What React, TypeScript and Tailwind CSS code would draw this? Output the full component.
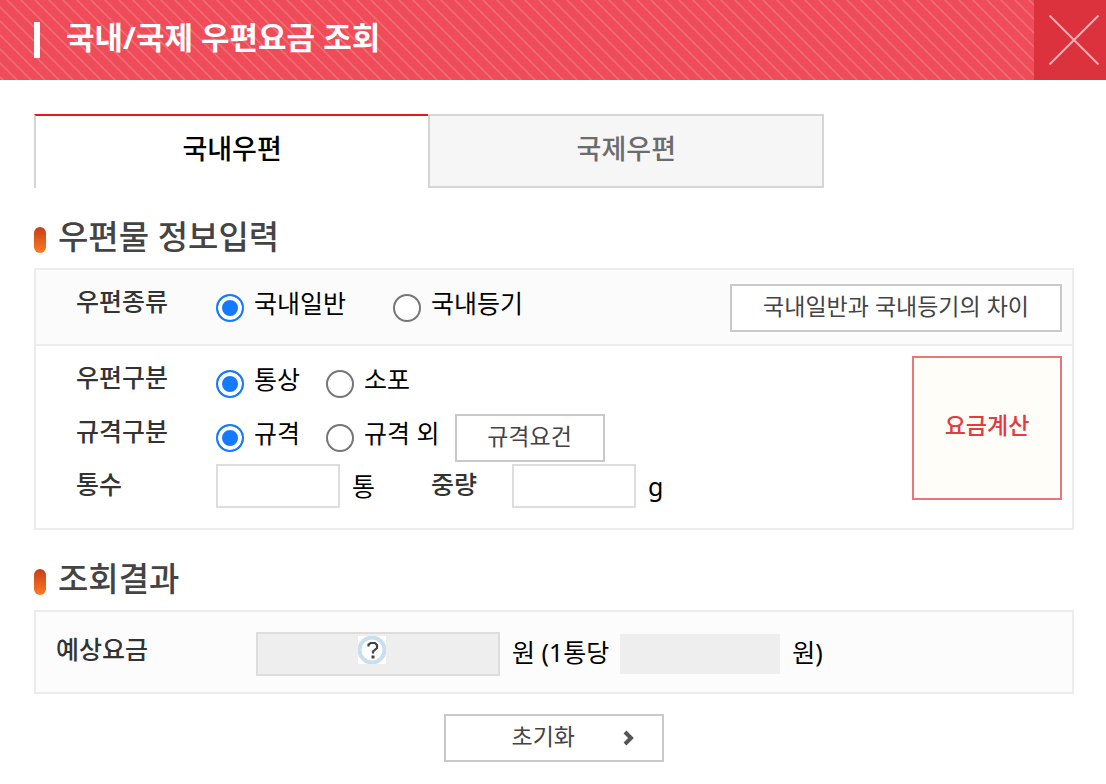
import { useState } from "react"
import type { ReactNode } from "react"

const inputClass = "h-11 w-[124px] border-2 border-[#dddddd] bg-white px-2 outline-none"
const buttonClass =
  "h-12 border-2 border-[#c9c9c9] bg-white pb-1 text-[23px] leading-8 text-[#444444] hover:border-[#999999]"

function SectionTitle({ children }: { children: ReactNode }) {
  return (
    <h2 className="flex h-10 items-center gap-3 text-[33px] leading-9 font-medium text-[#444444]">
      <span className="mt-2 h-[26px] w-3 rounded-md bg-linear-to-b from-[#c53d18] to-[#ff7a22]" />
      <span className="pt-[2px]">{children}</span>
    </h2>
  )
}

interface RadioProps {
  name: string
  label: string
  checked: boolean
  onChange: () => void
}

function Radio({ name, label, checked, onChange }: RadioProps) {
  return (
    <label className="flex items-center gap-[10px]">
      <input
        type="radio"
        name={name}
        checked={checked}
        onChange={onChange}
        className="size-7 appearance-none rounded-full border-2 border-[#767676] bg-white checked:border-[#147aff] checked:bg-[#147aff] checked:shadow-[inset_0_0_0_4px_#ffffff]"
      />
      <span className="pb-[10px]">{label}</span>
    </label>
  )
}

function Tabs({ value, onChange }: { value: string; onChange: (v: string) => void }) {
  return (
    <div role="tablist" className="flex w-[76%]">
      {["국내우편", "국제우편"].map((tab) => (
        <button
          key={tab}
          type="button"
          role="tab"
          aria-selected={value === tab}
          onClick={() => onChange(tab)}
          className={
            value === tab
              ? "h-[74px] flex-1 border-t-2 border-l-2 border-t-[#e71a1a] border-l-[#d5d5d5] bg-white pb-[6px] text-[27px] font-medium text-black"
              : "h-[74px] flex-1 border-2 border-[#d5d5d5] bg-[#f6f6f6] pb-1 text-[27px] font-medium text-[#6c6c6c]"
          }
        >
          {tab}
        </button>
      ))}
    </div>
  )
}

export default function App() {
  const [tab, setTab] = useState("국내우편")
  const [service, setService] = useState("국내일반")
  const [kind, setKind] = useState("통상")
  const [size, setSize] = useState("규격")

  return (
    <div className="bg-white font-['Noto_Sans','Noto_Sans_CJK_KR',sans-serif] text-[25px] leading-9 text-black">
      <header className="flex h-20 items-stretch bg-[#ef4b59] bg-[linear-gradient(45deg,transparent_18%,#f26b75_23%,#f26b75_27%,transparent_32%,transparent_68%,#f26b75_73%,#f26b75_77%,transparent_82%)] bg-size-[14px_14px]">
        <div className="flex flex-1 items-center gap-[26px] pl-[34px]">
          <span className="h-9 w-[6px] bg-white" />
          <h1 className="pb-[6px] text-[31px] leading-10 font-bold text-white">국내/국제 우편요금 조회</h1>
        </div>
        <button type="button" aria-label="닫기" className="flex w-[72px] items-center justify-center bg-[#dc323e] pl-2">
          <svg viewBox="0 0 50 50" className="size-[50px]" fill="none" stroke="#f6aeb3" strokeWidth="2">
            <path d="M0.5 0.5L49.5 49.5M49.5 0.5L0.5 49.5" />
          </svg>
        </button>
      </header>

      <main className="pt-[34px] pr-8 pb-5 pl-[34px]">
        <Tabs value={tab} onChange={setTab} />

        <section className="pt-7">
          <SectionTitle>우편물 정보입력</SectionTitle>
          <div className="mt-3 border-2 border-[#ececec]">
            <div className="flex h-[76px] items-center border-b-2 border-[#ececec] bg-[#fbfbfb] pt-[2px] pr-[10px] pl-10">
              <span className="w-[140px] pb-[14px] font-medium text-[#333333]">우편종류</span>
              <div className="flex flex-1 gap-[47px]">
                {["국내일반", "국내등기"].map((v) => (
                  <Radio key={v} name="service" label={v} checked={service === v} onChange={() => setService(v)} />
                ))}
              </div>
              <button type="button" className={`${buttonClass} px-[31px]`}>
                국내일반과 국내등기의 차이
              </button>
            </div>

            <div className="flex items-start pt-[10px] pr-[10px] pb-5 pl-10">
              <div className="flex-1">
                <div className="flex h-14 items-center">
                  <span className="w-[140px] pb-[14px] font-medium text-[#333333]">우편구분</span>
                  <div className="flex gap-[26px]">
                    {["통상", "소포"].map((v) => (
                      <Radio key={v} name="kind" label={v} checked={kind === v} onChange={() => setKind(v)} />
                    ))}
                  </div>
                </div>
                <div className="flex h-[52px] items-center">
                  <span className="w-[140px] pb-[14px] font-medium text-[#333333]">규격구분</span>
                  <div className="flex gap-[26px]">
                    {["규격", "규격 외"].map((v) => (
                      <Radio key={v} name="size" label={v} checked={size === v} onChange={() => setSize(v)} />
                    ))}
                  </div>
                  <button type="button" className={`${buttonClass} ml-[15px] w-[150px]`}>
                    규격요건
                  </button>
                </div>
                <div className="flex items-center">
                  <label htmlFor="count" className="w-[140px] pb-1 font-medium text-[#333333]">
                    통수
                  </label>
                  <input id="count" type="text" className={inputClass} />
                  <span className="pl-3">통</span>
                  <label htmlFor="weight" className="w-[137px] pb-1 pl-14 font-medium text-[#333333]">
                    중량
                  </label>
                  <input id="weight" type="text" className={inputClass} />
                  <span className="pl-3">g</span>
                </div>
              </div>
              <button
                type="button"
                className="h-36 w-[150px] border-2 border-[#e8777b] bg-[#fffdf8] pb-[6px] text-[23px] font-medium text-[#e23c40]"
              >
                요금계산
              </button>
            </div>
          </div>
        </section>

        <section className="pt-7">
          <SectionTitle>조회결과</SectionTitle>
          <div className="mt-3 flex h-[84px] items-center border-2 border-[#ececec] bg-[#fcfcfc] pt-1 pl-5">
            <label htmlFor="fee" className="w-[200px] pb-[10px] font-medium text-[#333333]">
              예상요금
            </label>
            <div className="relative">
              <input id="fee" type="text" readOnly className="block h-11 w-[244px] border-2 border-[#dddddd] bg-[#eeeeee] px-2" />
              <button type="button" aria-label="도움말" className="absolute top-1 left-[102px] bg-white">
                <svg viewBox="0 0 28 28" className="size-7" fill="none">
                  <circle cx="14" cy="14" r="12.5" stroke="#c9deee" strokeWidth="4" />
                  <path d="M10.5 10.5V8.5L12.5 7H17L19 9V12L15 15.5V17.5" stroke="#444444" strokeWidth="2.2" />
                  <path d="M15 19.5V22.5" stroke="#444444" strokeWidth="3" />
                </svg>
              </button>
            </div>
            <label htmlFor="unit-fee" className="pr-[11px] pb-1 pl-3">
              원 (1통당
            </label>
            <input id="unit-fee" type="text" readOnly className="h-10 w-40 bg-[#eeeeee] px-2" />
            <span className="pb-1 pl-3">원)</span>
          </div>
        </section>

        <div className="flex justify-center pt-5">
          <button type="button" className={`${buttonClass} flex w-[220px] items-center justify-end gap-12 pr-[27px]`}>
            초기화
            <svg viewBox="0 0 12 16" className="mt-1 h-4 w-3" fill="none" stroke="#555555" strokeWidth="4">
              <path d="M2 2L8 8L2 14" />
            </svg>
          </button>
        </div>
      </main>
    </div>
  )
}
